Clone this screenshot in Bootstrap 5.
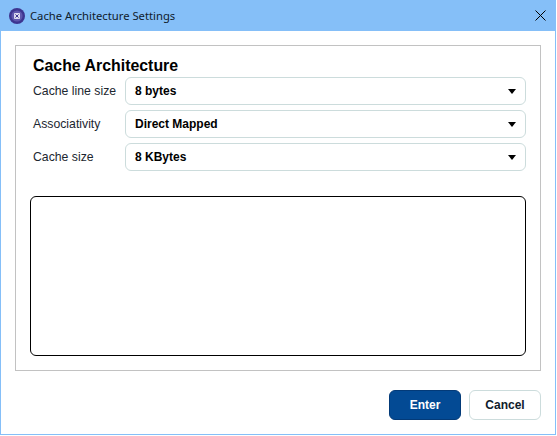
<!DOCTYPE html>
<html lang="en">
<head>
<meta charset="utf-8">
<title>Cache Architecture Settings</title>
<link href="https://cdn.jsdelivr.net/npm/bootstrap@5.3.0/dist/css/bootstrap.min.css" rel="stylesheet">
<style>
html, body { margin: 0; background: #fff; }
body { font-family: "Liberation Sans", Arial, sans-serif; color: #000; width: 557px; height: 436px; overflow: hidden; }
.win { width: 556px; height: 435px; border: 1px solid #85bff8; }
.win-title { height: 30px; background: #85bff8; padding-left: 8px; padding-right: 9px; }
.win-title-text { font-size: 11.25px; margin-left: 5px; color: #10202c; font-family: "Noto Sans", sans-serif; }
.win-close { margin-bottom: 2px; }
.win-body { height: 403px; padding: 14px 14px 0 14px; }
.panel-box { width: 526px; height: 326px; border: 1px solid #c2c2c2; padding: 11px 14px 0 14px; }
.panel-head { font-size: 15.9px; font-weight: 700; line-height: 18px; margin: 0 0 2px 3px; }
.form-line { height: 28px; margin-bottom: 5px; }
.form-name { width: 95px; font-size: 12.25px; padding-left: 3px; color: #1c2730; }
.pick-box { width: 401px; height: 28px; border: 1px solid #ccdcdc; border-radius: 6px; padding: 0 9px; font-size: 12px; font-weight: 700; background: #fff; }
.pick-arrow { width: 0; height: 0; border-left: 4.5px solid transparent; border-right: 4.5px solid transparent; border-top: 5px solid #000; }
.out-box { width: 496px; height: 160px; border: 1px solid #000; border-radius: 6px; margin-top: 25px; background: #fff; }
.foot { margin-top: 19px; width: 526px; gap: 8px; }
.act { width: 72px; height: 30px; font-size: 12px; font-weight: 700; border-radius: 6px; padding: 0; line-height: 1; }
.act-main { background: #034a94; border: 1px solid #033a78; color: #fff; }
.act-sub { background: #fff; border: 1px solid #ccdcdc; color: #10202c; }
</style>
</head>
<body>
<div class="win d-flex flex-column">
  <div class="win-title d-flex align-items-center">
    <svg width="16" height="16" viewBox="0 0 16 16" aria-hidden="true">
      <circle cx="8" cy="8" r="8" fill="#3d3590"/>
      <circle cx="8" cy="8" r="5.6" fill="#5f57ad"/>
      <rect x="5" y="5" width="6" height="6" rx=".8" fill="#dcdaf0"/>
      <path d="M6.4 6.4 9.6 9.6M9.6 6.4 6.4 9.6" stroke="#3d3590" stroke-width="1"/>
    </svg>
    <span class="win-title-text">Cache Architecture Settings</span>
    <svg class="ms-auto win-close" width="11" height="11" viewBox="0 0 11 11" aria-hidden="true">
      <path d="M.5.5 10.5 10.5M10.5.5.5 10.5" stroke="#000" stroke-width="1"/>
    </svg>
  </div>
  <div class="win-body">
    <div class="panel-box">
      <div class="panel-head">Cache Architecture</div>
      <div class="form-line d-flex align-items-center">
        <div class="form-name">Cache line size</div>
        <div class="pick-box d-flex align-items-center justify-content-between"><span>8 bytes</span><span class="pick-arrow"></span></div>
      </div>
      <div class="form-line d-flex align-items-center">
        <div class="form-name">Associativity</div>
        <div class="pick-box d-flex align-items-center justify-content-between"><span>Direct Mapped</span><span class="pick-arrow"></span></div>
      </div>
      <div class="form-line d-flex align-items-center">
        <div class="form-name">Cache size</div>
        <div class="pick-box d-flex align-items-center justify-content-between"><span>8 KBytes</span><span class="pick-arrow"></span></div>
      </div>
      <div class="out-box"></div>
    </div>
    <div class="foot d-flex justify-content-end">
      <button type="button" class="btn act act-main">Enter</button>
      <button type="button" class="btn act act-sub">Cancel</button>
    </div>
  </div>
</div>
<script src="https://cdn.jsdelivr.net/npm/bootstrap@5.3.0/dist/js/bootstrap.bundle.min.js"></script>
</body>
</html>
